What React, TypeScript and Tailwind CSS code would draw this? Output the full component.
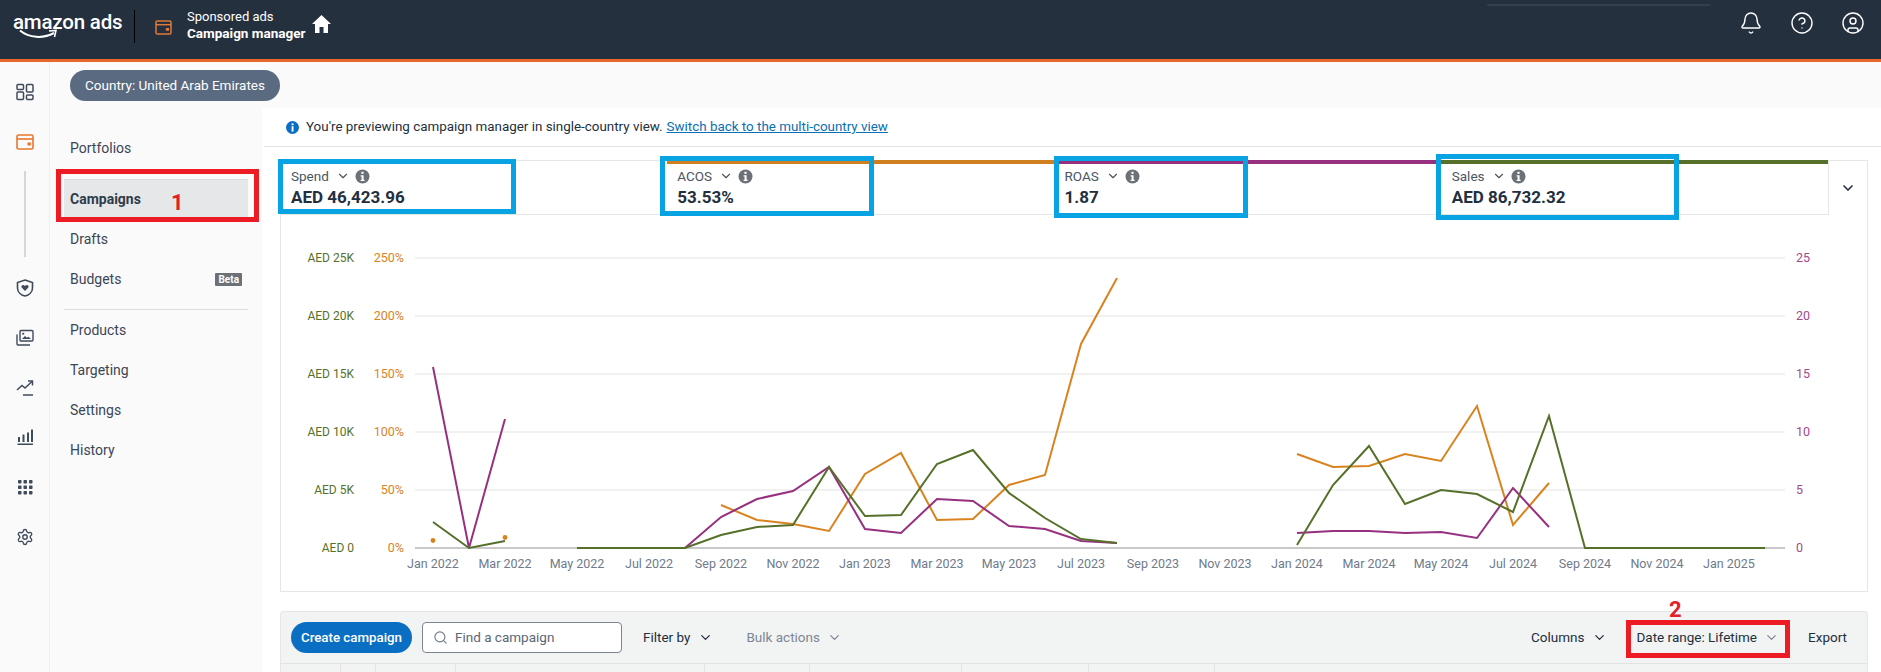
import { Bell, ChevronDown, CircleHelp, CircleUser, Search, Settings } from "lucide-react";

const FONT = "[font-family:Roboto,'Noto_Sans',sans-serif]";

const GREEN = "#56702a";
const ORANGE = "#d9831f";
const PURPLE = "#96307f";

// month index -> page y, chart is drawn in page coordinates
const mx = (m: number) => 433 + m * 36;
const line = (start: number, ys: number[]) =>
  ys.map((y, i) => `${mx(start + i)},${y}`).join(" ");

const greenLines = [
  line(0, [522, 548, 541]),
  line(4, [548, 548, 548, 548, 535, 527, 525, 467, 516, 515, 464, 450, 493, 518, 539, 543]),
  line(24, [545, 485, 446, 504, 490, 494, 512, 416, 548, 548, 548, 548, 548, 548]),
];
const orangeLines = [
  line(8, [505, 520, 524, 531, 474, 453, 520, 519, 485, 475, 344, 278]),
  line(24, [454, 467, 466, 454, 461, 406, 525, 483]),
];
const purpleLines = [
  line(0, [367, 548, 419]),
  line(7, [548, 517, 499, 491, 467, 529, 533, 499, 501, 526, 529, 541, 543]),
  line(24, [533, 531, 531, 533, 532, 538, 488, 527]),
];

const gridRows = [
  { y: 258, aed: "AED 25K", pct: "250%", r: "25" },
  { y: 316, aed: "AED 20K", pct: "200%", r: "20" },
  { y: 374, aed: "AED 15K", pct: "150%", r: "15" },
  { y: 432, aed: "AED 10K", pct: "100%", r: "10" },
  { y: 490, aed: "AED 5K", pct: "50%", r: "5" },
  { y: 548, aed: "AED 0", pct: "0%", r: "0" },
];

const months = [
  "Jan 2022", "Mar 2022", "May 2022", "Jul 2022", "Sep 2022", "Nov 2022", "Jan 2023", "Mar 2023", "May 2023", "Jul 2023",
  "Sep 2023", "Nov 2023", "Jan 2024", "Mar 2024", "May 2024", "Jul 2024", "Sep 2024", "Nov 2024", "Jan 2025",
];

const metrics = [
  { label: "Spend", value: "AED 46,423.96", top: "pl-[10px] border-t border-t-[#e6e6e6] pt-[3px]" },
  { label: "ACOS", value: "53.53%", top: "pl-[10px] border-t-[4px] border-t-[#cf7f1f]" },
  { label: "ROAS", value: "1.87", top: "pl-[11px] border-t-[4px] border-t-[#96307f]" },
  { label: "Sales", value: "AED 86,732.32", top: "pl-[11px] border-t-[4px] border-t-[#56702a]" },
];

function WalletIcon({ className }: { className: string }) {
  return (
    <svg className={className} viewBox="0 0 18 16" fill="none" stroke="currentColor" strokeWidth="1.6">
      <rect x="1" y="1" width="16" height="14" rx="1.5" />
      <path d="M1 5h16" />
      <rect x="11.5" y="8.5" width="3.4" height="3" fill="currentColor" stroke="none" />
    </svg>
  );
}

function InfoDot() {
  return (
    <svg className="w-[15px] h-[15px]" viewBox="0 0 15 15">
      <circle cx="7.5" cy="7.5" r="7" fill="#6c7077" />
      <rect x="6.4" y="2.8" width="2.2" height="2" fill="#fff" />
      <path d="M5.6 6.2h3v4.6h1v1.2H5.6v-1.2h1V7.4h-1z" fill="#fff" />
    </svg>
  );
}

function RailIcons() {
  const cls = "w-[18px] h-[18px] text-[#3f4b5b]";
  return (
    <div className="w-[50px] shrink-0 bg-[#fafafa] border-r border-[#eeeeee] flex flex-col items-center pt-[21px]">
      <svg className={cls} viewBox="0 0 18 18" fill="none" stroke="currentColor" strokeWidth="1.5">
        <rect x="1" y="1.5" width="6.5" height="5" rx="1" />
        <rect x="1" y="9" width="6.5" height="7.5" rx="1" />
        <rect x="10.5" y="1.5" width="6.5" height="7.5" rx="1" />
        <rect x="10.5" y="12" width="6.5" height="4.5" rx="1" />
      </svg>
      <WalletIcon className="w-[18px] h-[16px] text-[#e8772e] mt-[33px]" />
      <div className="w-[2px] h-[86px] bg-[#d3d6da] mt-[21px]" />
      <svg className={`${cls} mt-[22px]`} viewBox="0 0 18 18" fill="none" stroke="currentColor" strokeWidth="1.6">
        <path d="M9 1 L16.5 3.5 V9 C16.5 13 13 16 9 17 C5 16 1.5 13 1.5 9 V3.5 Z" />
        <path d="M9 12 L5.6 8.4 C4.6 6.6 7.4 5 9 7 C10.6 5 13.4 6.6 12.4 8.4 Z" fill="currentColor" stroke="none" />
      </svg>
      <svg className={`${cls} mt-[32px]`} viewBox="0 0 18 18" fill="none" stroke="currentColor" strokeWidth="1.4">
        <rect x="4" y="1.5" width="13" height="10.5" rx="1" />
        <path d="M1 5.5 V15 a1 1 0 0 0 1 1 H14" />
        <path d="M6 10 L9 7 L11 8.8 L12.5 7.8 L15 10 Z" fill="currentColor" stroke="none" />
        <rect x="6.2" y="3.8" width="2" height="1.8" fill="currentColor" stroke="none" />
      </svg>
      <svg className={`${cls} mt-[32px]`} viewBox="0 0 18 18" fill="none" stroke="currentColor" strokeWidth="1.5">
        <path d="M1 11 L6 6.5 L9 9 L16 2.5" />
        <path d="M12 2 H16.5 V6.5" />
        <path d="M7 16 H17" />
      </svg>
      <svg className={`${cls} mt-[31px]`} viewBox="0 0 18 18" fill="currentColor">
        <rect x="2" y="9" width="2" height="5" />
        <rect x="6.5" y="6.5" width="2" height="7.5" />
        <rect x="11" y="4.5" width="2" height="9.5" />
        <rect x="15" y="1.5" width="2" height="12.5" />
        <rect x="1.5" y="15.5" width="15.5" height="1.5" />
      </svg>
      <svg className={`${cls} mt-[32px]`} viewBox="0 0 18 18" fill="currentColor">
        {[2, 7.5, 13].flatMap((y) =>
          [2, 7.5, 13].map((x) => <rect key={`${x}-${y}`} x={x} y={y} width="3.5" height="3.5" rx="0.8" />)
        )}
      </svg>
      <Settings className={`${cls} mt-[32px]`} strokeWidth={1.8} />
    </div>
  );
}

function SubNav() {
  const item = "h-10 flex items-center px-[6px] text-[14px] text-[#3a4656]";
  return (
    <div className="w-[212px] shrink-0 bg-[#fafafa] pt-5 pl-[14px] pr-[14px]">
      <div className={item}>Portfolios</div>
      <div className="h-[38px] mt-[11px] pt-[1px] flex items-center px-[6px] text-[14px] font-bold text-[#2f3b4b] bg-[#e6e7e9] border-t border-[#d9dbde]">Campaigns</div>
      <div className={`${item} mt-[2px]`}>Drafts</div>
      <div className={`${item} justify-between`}>
        <span>Budgets</span>
        <span className="bg-[#6c7178] text-white text-[10px] font-bold leading-[13px] px-[3px] rounded-[1px]">Beta</span>
      </div>
      <div className="h-px bg-[#dcdee1] mt-[10px]" />
      <div className={item}>Products</div>
      <div className={item}>Targeting</div>
      <div className={item}>Settings</div>
      <div className={item}>History</div>
    </div>
  );
}

function Chart() {
  return (
    <svg className="block w-[1586px] h-[376px]" viewBox="281 215 1586 376">
      {gridRows.map((g) => (
        <g key={g.y}>
          <line x1="415" x2="1785" y1={g.y} y2={g.y} stroke={g.y === 548 ? "#c9c9c9" : "#ececec"} strokeWidth={g.y === 548 ? 1.8 : 1.6} />
          <text x="354" y={g.y + 3.5} textAnchor="end" fontSize="12" fill={GREEN}>{g.aed}</text>
          <text x="404" y={g.y + 3.5} textAnchor="end" fontSize="12.5" fill={ORANGE}>{g.pct}</text>
          <text x="1796" y={g.y + 3.5} fontSize="12.5" fill="#a24a8e">{g.r}</text>
        </g>
      ))}
      {months.map((m, i) => (
        <text key={m} x={mx(i * 2)} y="568" textAnchor="middle" fontSize="12.5" fill="#6f7a8a">{m}</text>
      ))}
      <circle cx={mx(0)} cy="540.5" r="2.4" fill={ORANGE} />
      <circle cx={mx(2)} cy="537.5" r="2.4" fill={ORANGE} />
      {orangeLines.map((p) => <polyline key={p} points={p} fill="none" stroke={ORANGE} strokeWidth="2" />)}
      {purpleLines.map((p) => <polyline key={p} points={p} fill="none" stroke={PURPLE} strokeWidth="2" />)}
      {greenLines.map((p) => <polyline key={p} points={p} fill="none" stroke={GREEN} strokeWidth="2" />)}
    </svg>
  );
}

export default function App() {
  return (
    <div className={`relative w-[1881px] h-[672px] overflow-hidden bg-white ${FONT}`}>
      {/* top bar */}
      <header className="relative h-[62px] bg-[#25303f] border-b-[3px] border-[#e8672a] flex items-center text-white">
        <div className="relative w-[134px] h-full pl-[13px] shrink-0">
          <div className="text-[20.5px] leading-[28px] pt-[8px] font-medium tracking-[-0.2px] whitespace-nowrap">amazon ads</div>
          <svg className="absolute left-[19px] top-[29px] w-[40px] h-[11px]" viewBox="0 0 40 11" fill="none">
            <path d="M1 1.5 C10 9 24 10 35 4" stroke="#fff" strokeWidth="2" />
            <path d="M30 2 L37 1.5 L35.5 8" stroke="#fff" strokeWidth="1.6" />
          </svg>
        </div>
        <div className="w-px h-[33px] bg-black -mt-[7px]" />
        <WalletIcon className="w-[17px] h-[15px] text-[#e07a3a] ml-[20px] -mt-[5px]" />
        <div className="ml-[15px] -mt-[9px] leading-[17px]">
          <div className="text-[13px]">Sponsored ads</div>
          <div className="text-[13.5px] font-bold whitespace-nowrap">Campaign manager</div>
        </div>
        <svg className="w-[19px] h-[18px] ml-[7px] -mt-[11px]" viewBox="0 0 19 18" fill="#fff">
          <path d="M9.5 0 L19 9 H16 V18 H11.5 V12 H7.5 V18 H3 V9 H0 Z" />
        </svg>
        <div className="ml-auto flex items-center gap-[27px] pr-[16px] -mt-[13px]">
          <Bell className="w-[24px] h-[24px]" strokeWidth={1.4} />
          <CircleHelp className="w-[24px] h-[24px]" strokeWidth={1.4} />
          <CircleUser className="w-[24px] h-[24px]" strokeWidth={1.4} />
        </div>
        <div className="absolute left-[1487px] top-[4px] w-[224px] h-[2px] rounded-full bg-[#343f4e]" />
      </header>

      <div className="flex h-[610px]">
        <RailIcons />
        <div className="flex-1 flex flex-col min-w-0">
          {/* country strip */}
          <div className="h-[46px] bg-[#fafafa] pt-[8px] pl-[20px] shrink-0">
            <div className="h-[31px] w-[210px] rounded-full bg-[#5a6a80] text-white text-[13.5px] flex items-center justify-center whitespace-nowrap">
              Country: United Arab Emirates
            </div>
          </div>
          <div className="flex flex-1 min-h-0">
            <SubNav />
            <main className="flex-1 min-w-0 bg-white">
              <div className="h-[39px] ml-[2px] border-b border-[#e3e3e3] flex items-center pl-[22px] text-[13.4px] text-[#232f3e]">
                <svg className="w-[13px] h-[13px] mr-[7px]" viewBox="0 0 13 13">
                  <circle cx="6.5" cy="6.5" r="6.5" fill="#0a6fc2" />
                  <rect x="5.6" y="2.4" width="1.9" height="1.8" fill="#fff" />
                  <rect x="5.6" y="5.2" width="1.9" height="5.4" fill="#fff" />
                </svg>
                <span>You're previewing campaign manager in single-country view.</span>
                <span className="ml-1 text-[#0a6fb5] underline">Switch back to the multi-country view</span>
              </div>

              {/* metrics + chart */}
              <section className="ml-[18px] mr-[13px] mt-[13px] h-[432px] border border-[#e6e6e6]">
                <div className="flex h-[54px]">
                  <div className="w-[1548px] h-[55px] -mt-px flex border-r border-b border-[#e6e6e6]">
                    {metrics.map((m) => (
                      <div key={m.label} className={`flex-1 ${m.top}`}>
                        <div className="flex items-center h-[22px] mt-[1px] text-[13.5px] text-[#4b5563]">
                          <span>{m.label}</span>
                          <ChevronDown className="w-[14px] h-[14px] ml-[7px]" strokeWidth={2} />
                          <span className="ml-[5px]"><InfoDot /></span>
                        </div>
                        <div className="text-[17px] font-bold leading-[20px] text-[#232f3e] whitespace-nowrap">{m.value}</div>
                      </div>
                    ))}
                  </div>
                  <div className="flex-1 flex items-center justify-center">
                    <ChevronDown className="w-[16px] h-[16px] text-[#232f3e]" strokeWidth={2.5} />
                  </div>
                </div>
                <Chart />
              </section>

              {/* table toolbar */}
              <section className="ml-[18px] mr-[13px] mt-[19px] bg-[#f2f3f3] border border-[#e6e6e6] rounded-t-[3px]">
                <div className="h-[52px] flex items-center pl-[10px] pr-[20px] border-b border-[#e3e3e3] text-[13.5px] text-[#232f3e]">
                  <div className="h-[31px] w-[121px] rounded-full bg-[#0a6fc2] text-white text-[13.3px] font-medium flex items-center justify-center whitespace-nowrap">Create campaign</div>
                  <div className="h-[31px] w-[200px] ml-[10px] rounded-[4px] border border-[#7c8594] bg-white flex items-center pl-[10px] text-[#5b6675]">
                    <Search className="w-[15px] h-[15px] text-[#6f7a8a] mr-[7px]" strokeWidth={1.8} />
                    Find a campaign
                  </div>
                  <span className="ml-[21px]">Filter by</span>
                  <ChevronDown className="w-[15px] h-[15px] ml-[8px]" strokeWidth={2} />
                  <span className="ml-[33px] text-[#7d8794]">Bulk actions</span>
                  <ChevronDown className="w-[15px] h-[15px] ml-[7px] text-[#7d8794]" strokeWidth={2} />
                  <span className="ml-auto">Columns</span>
                  <ChevronDown className="w-[15px] h-[15px] ml-[8px]" strokeWidth={2} />
                  <span className="ml-[29px]">Date range: Lifetime</span>
                  <ChevronDown className="w-[15px] h-[15px] ml-[7px] text-[#7d8794]" strokeWidth={2} />
                  <span className="ml-[29px]">Export</span>
                </div>
                <div className="flex h-[10px] [&>div]:border-r [&>div]:border-[#e3e3e3]">
                  <div className="w-[60px]" />
                  <div className="w-[35px]" />
                  <div className="w-[80px]" />
                  <div className="w-[249px]" />
                  <div className="w-[105px]" />
                  <div className="w-[152px]" />
                  <div className="w-[127px]" />
                  <div className="w-[126px]" />
                </div>
              </section>
            </main>
          </div>
        </div>
      </div>

      {/* hand-drawn annotations on top of the screenshot */}
      <div className="absolute left-[56px] top-[169px] w-[203px] h-[53px] border-[5px] border-[#ed1c24]" />
      <div className="absolute left-[171px] top-[190px] text-[22px] leading-[26px] font-bold text-[#e3202a]">1</div>
      <div className="absolute left-[278px] top-[159px] w-[238px] h-[55px] border-[5px] border-[#08a3e2]" />
      <div className="absolute left-[660px] top-[156px] w-[214px] h-[60px] border-[5px] border-[#08a3e2]" />
      <div className="absolute left-[1054px] top-[156px] w-[194px] h-[62px] border-[5px] border-[#08a3e2]" />
      <div className="absolute left-[1436px] top-[154px] w-[243px] h-[66px] border-[5px] border-[#08a3e2]" />
      <div className="absolute left-[1626px] top-[620px] w-[164px] h-[38px] border-[5px] border-[#ed1c24]" />
      <div className="absolute left-[1669px] top-[597px] text-[22px] leading-[26px] font-bold text-[#e3202a]">2</div>
    </div>
  );
}
